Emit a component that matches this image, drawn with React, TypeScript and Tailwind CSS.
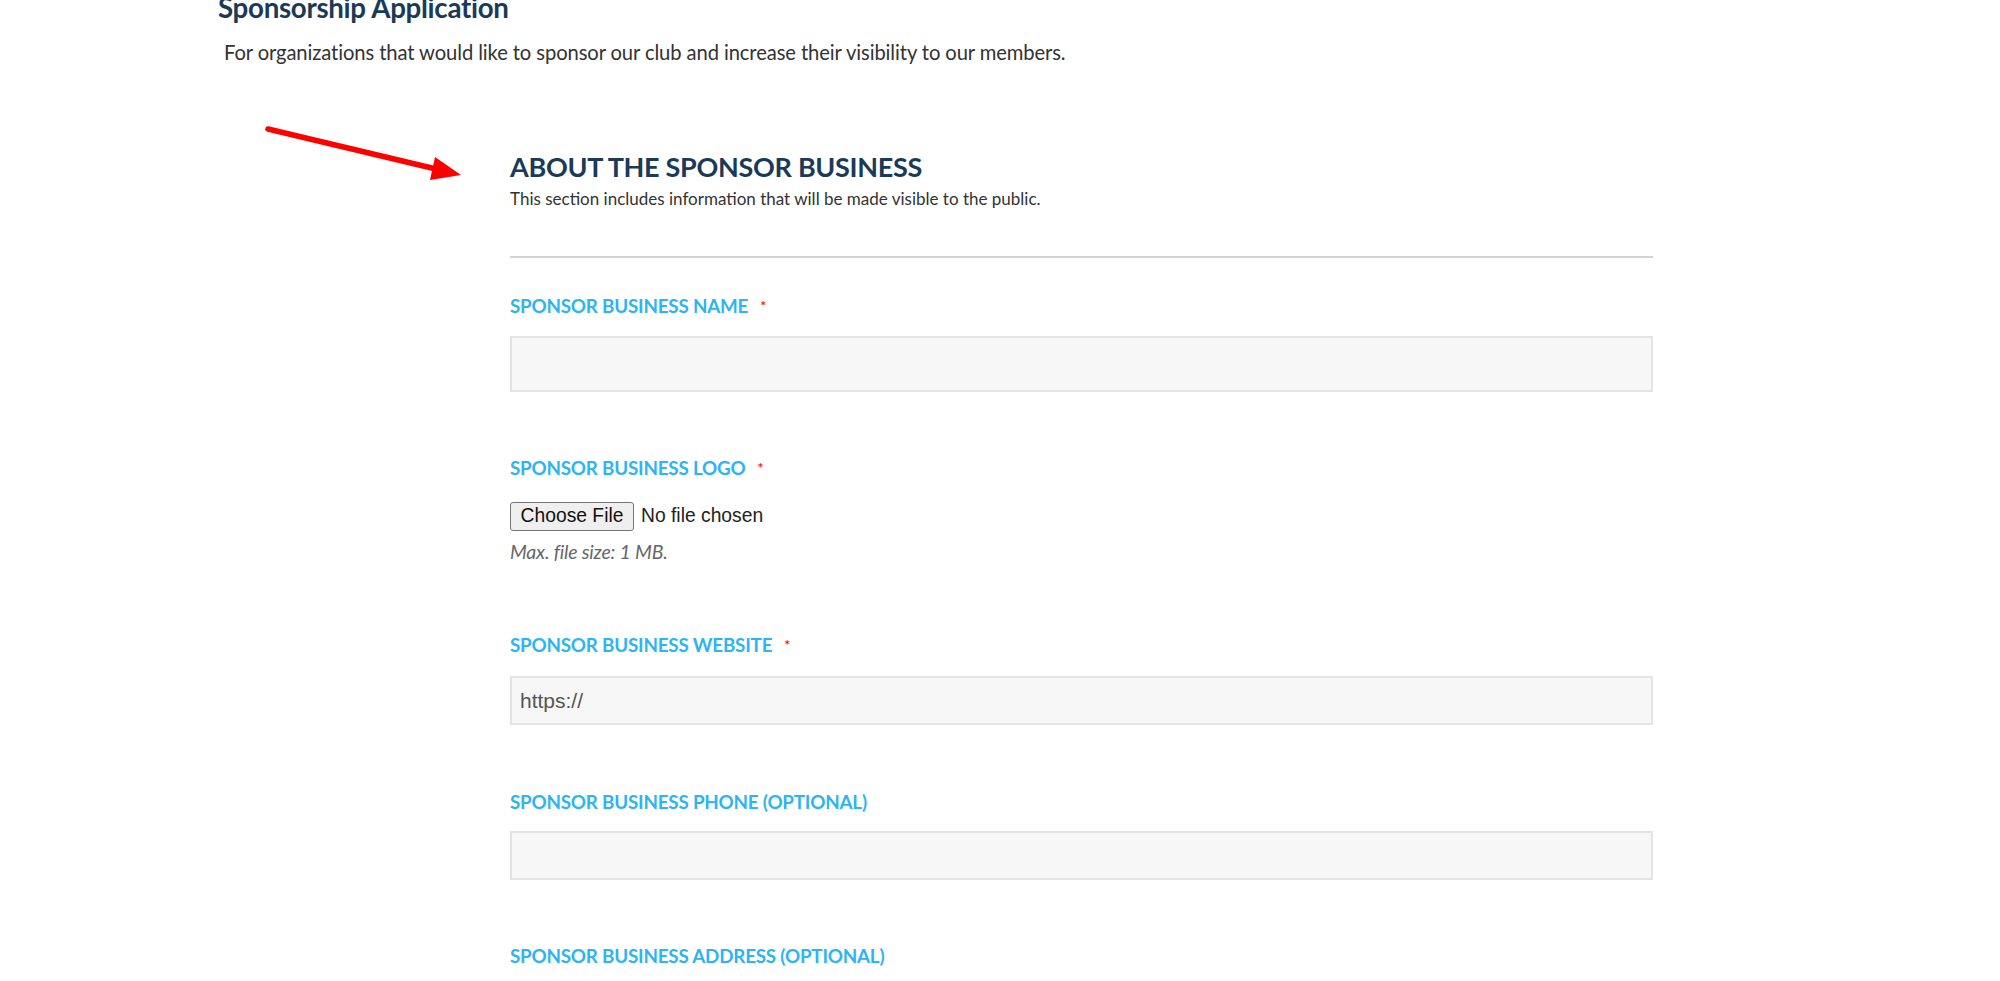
import React from "react";

function FieldLabel({ text, required }: { text: string; required?: boolean }) {
  return (
    <div className="flex items-start h-[20px] text-[18.8px] leading-[20px] font-bold text-[#2db4f2] tracking-[-0.2px]">
      <span>{text}</span>
      {required && <span className="ml-[12px] mt-[2px] text-[#ff1a1a] text-[14px] leading-[15px]">*</span>}
    </div>
  );
}

function TextBox({ tall, value }: { tall?: boolean; value?: string }) {
  return (
    <div
      className={`w-full border-2 border-[#e4e4e4] bg-[#f7f7f7] flex items-center px-[8px] font-['Liberation_Sans',Arial,sans-serif] text-[21px] text-[#555] ${
        tall ? "h-[56px]" : "h-[49px]"
      }`}
    >
      {value}
    </div>
  );
}

export default function App() {
  return (
    <div className="min-h-screen w-full bg-white font-['Lato',sans-serif] relative overflow-hidden">
      {/* red pointer arrow */}
      <svg className="absolute left-0 top-0 pointer-events-none" width="500" height="200">
        <line x1="268" y1="129" x2="436" y2="169" stroke="#ff0000" strokeWidth="5.5" strokeLinecap="round" />
        <polygon points="461,175 435,157 430,180" fill="#ff0000" />
      </svg>

      <div className="pl-[218px]">
        <h1 className="mt-[-8px] h-[31px] text-[27.7px] leading-[31px] font-bold text-[#1b3a57] tracking-[-0.3px]">
          Sponsorship Application
        </h1>
        <p className="mt-[17px] ml-[6px] text-[20.2px] leading-[24px] text-[#333] tracking-[-0.1px]">
          For organizations that would like to sponsor our club and increase their visibility to our members.
        </p>
      </div>

      <div className="ml-[510px] w-[1143px] mt-[87px]">
        <h2 className="h-[31px] text-[27px] leading-[31px] font-bold text-[#1b3a57] tracking-[-0.3px]">
          ABOUT THE SPONSOR BUSINESS
        </h2>
        <p className="mt-[7px] h-[20px] text-[17px] leading-[20px] text-[#333]">
          This section includes information that will be made visible to the public.
        </p>
        <div className="mt-[47px] h-[2px] bg-[#d4d4d4]" />

        <div className="mt-[38px]">
          <FieldLabel text="SPONSOR BUSINESS NAME" required />
          <div className="mt-[20px]">
            <TextBox tall />
          </div>
        </div>

        <div className="mt-[66px]">
          <FieldLabel text="SPONSOR BUSINESS LOGO" required />
          <div className="mt-[24px] flex items-center h-[29px] font-['Liberation_Sans',Arial,sans-serif] text-[19.3px] text-black">
            <span className="h-[29px] w-[124px] flex items-center justify-center rounded-[3px] border border-[#767676] bg-[#efefef] text-[#111]">
              Choose File
            </span>
            <span className="ml-[7px] text-[#222]">No file chosen</span>
          </div>
          <p className="mt-[10px] h-[22px] text-[19.5px] leading-[22px] italic text-[#666] tracking-[-0.2px]">
            Max. file size: 1 MB.
          </p>
        </div>

        <div className="mt-[72px]">
          <FieldLabel text="SPONSOR BUSINESS WEBSITE" required />
          <div className="mt-[21px]">
            <TextBox value="https://" />
          </div>
        </div>

        <div className="mt-[67px]">
          <FieldLabel text="SPONSOR BUSINESS PHONE (OPTIONAL)" />
          <div className="mt-[19px]">
            <TextBox />
          </div>
        </div>

        <div className="mt-[66px]">
          <FieldLabel text="SPONSOR BUSINESS ADDRESS (OPTIONAL)" />
          <div className="mt-[30px]">
            <TextBox />
          </div>
        </div>
      </div>
    </div>
  );
}
